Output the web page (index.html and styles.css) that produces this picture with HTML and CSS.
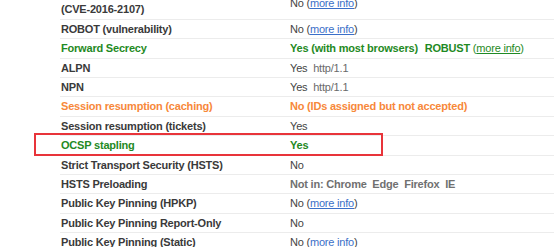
FILE: index.html
```
<!DOCTYPE html>
<html lang="en">
<head>
    <meta charset="UTF-8">
    <link rel="stylesheet" href="styles.css">
</head>
<body>
    <div class="report">
        <div class="row row-tall">
            <div class="label">(CVE-2016-2107)</div>
            <div class="value">No (<a href="#">more info</a>)</div>
        </div>
        <div class="row">
            <div class="label">ROBOT (vulnerability)</div>
            <div class="value">No (<a href="#">more info</a>)</div>
        </div>
        <div class="row">
            <div class="label good">Forward Secrecy</div>
            <div class="value good bold">Yes (with most browsers) <span class="gap">ROBUST</span> <span class="plain">(<a href="#">more info</a>)</span></div>
        </div>
        <div class="row">
            <div class="label">ALPN</div>
            <div class="value">Yes <span class="proto">http/1.1</span></div>
        </div>
        <div class="row">
            <div class="label">NPN</div>
            <div class="value">Yes <span class="proto">http/1.1</span></div>
        </div>
        <div class="row">
            <div class="label warn">Session resumption (caching)</div>
            <div class="value warn bold">No (IDs assigned but not accepted)</div>
        </div>
        <div class="row">
            <div class="label">Session resumption (tickets)</div>
            <div class="value">Yes</div>
        </div>
        <div class="row">
            <div class="highlight"></div>
            <div class="label good">OCSP stapling</div>
            <div class="value good bold">Yes</div>
        </div>
        <div class="row">
            <div class="label">Strict Transport Security (HSTS)</div>
            <div class="value">No</div>
        </div>
        <div class="row">
            <div class="label">HSTS Preloading</div>
            <div class="value muted bold">Not in: Chrome&nbsp; Edge&nbsp; Firefox&nbsp; IE</div>
        </div>
        <div class="row">
            <div class="label">Public Key Pinning (HPKP)</div>
            <div class="value">No (<a href="#">more info</a>)</div>
        </div>
        <div class="row">
            <div class="label">Public Key Pinning Report-Only</div>
            <div class="value">No</div>
        </div>
        <div class="row">
            <div class="label">Public Key Pinning (Static)</div>
            <div class="value">No (<a href="#">more info</a>)</div>
        </div>
    </div>
</body>
</html>
```

FILE: styles.css
```
body {
    margin: 0;
    background: #fff;
    font-family: "Liberation Sans", Arial, sans-serif;
    font-size: 11px;
    letter-spacing: -0.2px;
    color: #444;
    overflow: hidden;
}

.report {
    margin-top: -12px;
    margin-left: 60px;
}

.row {
    position: relative;
    display: grid;
    grid-template-columns: 229px 1fr;
    align-items: center;
    padding: 3px 0;
    line-height: 12.4px;
    border-bottom: 1px solid #ececec;
}

/* first line of this label is scrolled out of view */
.row-tall .label {
    padding-top: 12.4px;
}

.label {
    padding-left: 1px;
    font-weight: bold;
    color: #3a3a3a;
}

.value {
    padding-left: 1px;
}

.bold {
    font-weight: bold;
}

.good {
    color: #1f8a24;
}

.warn {
    color: #f7883a;
}

.muted {
    color: #707070;
}

.gap {
    margin-left: 4px;
}

.plain {
    font-weight: normal;
}

.proto {
    margin-left: 3px;
    color: #6a6a6a;
}

a {
    color: #3b6fc8;
    text-decoration: underline;
}

.good a {
    color: #1f8a24;
}

.highlight {
    position: absolute;
    top: -3px;
    left: -26px;
    width: 349px;
    height: 23px;
    box-sizing: border-box;
    border: 2px solid #e8343a;
}
```
